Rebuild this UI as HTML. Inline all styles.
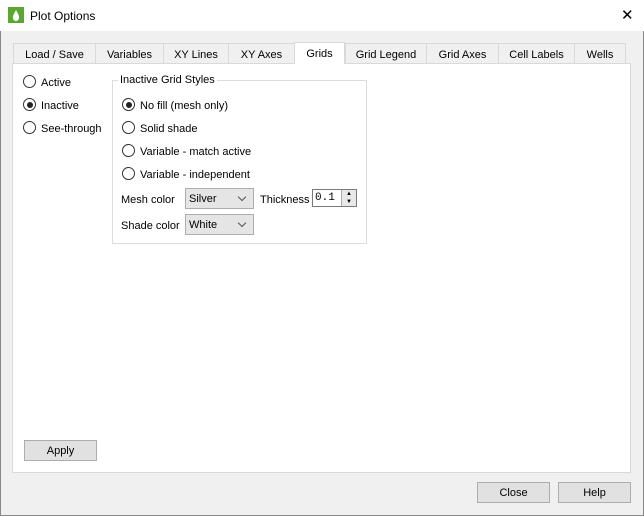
<!DOCTYPE html><html><head><style>
body{margin:0;width:644px;height:516px;background:#f0f0f0;font-family:"Liberation Sans",sans-serif;font-size:11px;color:#000;position:relative;overflow:hidden}
.a{position:absolute;white-space:nowrap}
.win{position:absolute;left:0;top:0;width:642px;height:514px;border:1px solid #888}
.title{position:absolute;left:0;top:0;width:644px;height:31px;background:#fff}
.tab{position:absolute;top:43px;height:20px;border:1px solid #d9d9d9;border-bottom:none;background:#f0f0f0;text-align:center;line-height:22px;box-sizing:border-box}
.panel{position:absolute;left:12px;top:63px;width:619px;height:410px;background:#fff;border:1px solid #d9d9d9;box-sizing:border-box}
.r{position:absolute;width:13px;height:13px;border:1px solid #333;border-radius:50%;background:#fff;box-sizing:border-box}
.r.on::after{content:"";position:absolute;left:2.5px;top:2.5px;width:6px;height:6px;border-radius:50%;background:#222}
.btn{position:absolute;height:21px;background:#e1e1e1;border:1px solid #adadad;box-sizing:border-box;text-align:center;line-height:21px}
.sel{position:absolute;height:21px;background:#e5e5e5;border:1px solid #adadad;box-sizing:border-box;line-height:20px;padding-left:3px}
.sel::after{content:"";position:absolute;right:8px;top:5px;width:5px;height:5px;border-right:1px solid #555;border-bottom:1px solid #555;transform:rotate(45deg)}
</style></head><body>
<div class="win"></div>
<div class="title"></div>
<svg class="a" style="left:8px;top:7px" width="16" height="16"><rect width="16" height="16" fill="#5aa832"/><path d="M8 3 C6 7 4.5 9 5 11 A3 3 0 0 0 11 11 C11.5 9 10 7 8 3Z" fill="#fff"/></svg>
<div class="a" style="left:30px;top:9px;font-size:12px">Plot Options</div>
<div class="a" style="left:621px;top:6px;font-size:15px">✕</div>
<div class="panel"></div>
<div class="tab" style="left:13px;width:83px">Load / Save</div>
<div class="tab" style="left:95px;width:69px">Variables</div>
<div class="tab" style="left:163px;width:66px">XY Lines</div>
<div class="tab" style="left:228px;width:67px">XY Axes</div>
<div class="tab" style="left:294px;width:51px;top:42px;height:22px;background:#fff;line-height:23px">Grids</div>
<div class="tab" style="left:345px;width:82px">Grid Legend</div>
<div class="tab" style="left:426px;width:73px">Grid Axes</div>
<div class="tab" style="left:498px;width:77px">Cell Labels</div>
<div class="tab" style="left:574px;width:52px">Wells</div>
<div class="r" style="left:23px;top:75px"></div><div class="a" style="left:41px;top:77px">Active</div>
<div class="r on" style="left:23px;top:98px"></div><div class="a" style="left:41px;top:100px">Inactive</div>
<div class="r" style="left:23px;top:121px"></div><div class="a" style="left:41px;top:123px">See-through</div>
<div class="a" style="left:112px;top:80px;width:253px;height:162px;border:1px solid #dcdcdc"></div>
<div class="a" style="left:118px;top:74px;background:#fff;padding:0 2px">Inactive Grid Styles</div>
<div class="r on" style="left:122px;top:98px"></div><div class="a" style="left:140px;top:100px">No fill (mesh only)</div>
<div class="r" style="left:122px;top:121px"></div><div class="a" style="left:140px;top:123px">Solid shade</div>
<div class="r" style="left:122px;top:144px"></div><div class="a" style="left:140px;top:146px">Variable - match active</div>
<div class="r" style="left:122px;top:167px"></div><div class="a" style="left:140px;top:169px">Variable - independent</div>
<div class="a" style="left:121px;top:194px">Mesh color</div>
<div class="sel" style="left:185px;top:188px;width:69px">Silver</div>
<div class="a" style="left:260px;top:194px">Thickness</div>
<div class="a" style="left:312px;top:189px;width:45px;height:18px;border:1px solid #7a7a7a;background:#fff;box-sizing:border-box;font-family:'Liberation Mono',monospace;line-height:17px;padding-left:2px">0.1</div>
<div class="a" style="left:341px;top:190px;width:14px;height:16px;background:#e8e8e8;border-left:1px solid #aaa;font-size:6px;line-height:8px;text-align:center">▲<br>▼</div>
<div class="a" style="left:121px;top:220px">Shade color</div>
<div class="sel" style="left:185px;top:214px;width:69px">White</div>
<div class="btn" style="left:24px;top:440px;width:73px">Apply</div>
<div class="btn" style="left:477px;top:482px;width:73px">Close</div>
<div class="btn" style="left:558px;top:482px;width:73px">Help</div>
</body></html>
